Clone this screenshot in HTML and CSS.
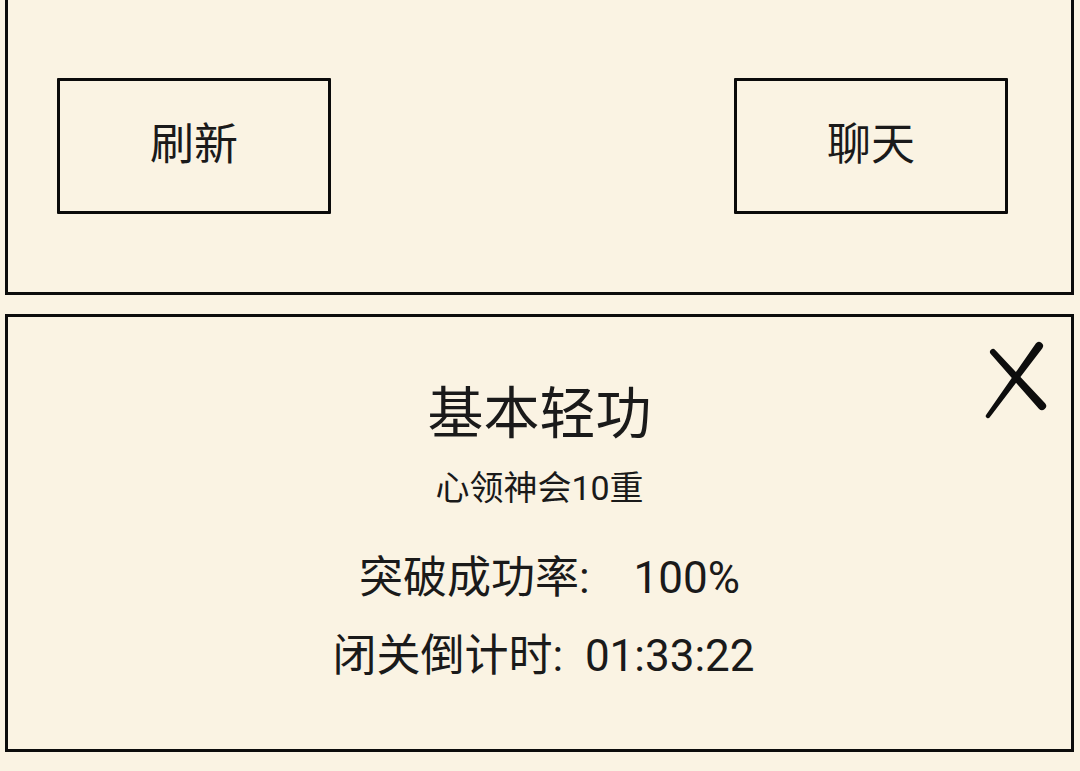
FILE: index.html
```html
<!DOCTYPE html>
<html lang="zh-CN">
<head>
<meta charset="utf-8">
<title>闭关</title>
<link rel="stylesheet" href="styles.css">
</head>
<body>
<div class="page">
  <section class="panel panel-top">
    <div class="btn-row">
      <div class="btn">刷新</div>
      <div class="btn">聊天</div>
    </div>
  </section>
  <section class="panel panel-main">
    <svg class="close" viewBox="0 0 66 82" width="66" height="82" aria-label="关闭">
      <path d="M13.22 9.98 L63.11 63.18 A4.2 4.2 0 0 1 56.89 68.82 L8.78 14.02 A3 3 0 0 1 13.22 9.98 Z" fill="#0d0d0d"/>
      <path d="M53.8 3.6 A4 4 0 0 1 60.2 8.4 L7.8 77.3 A2.2 2.2 0 0 1 4.2 74.7 Z" fill="#0d0d0d"/>
    </svg>
    <div class="info">
      <div class="title">基本轻功</div>
      <div class="sub">心领神会10重</div>
      <div class="line line-rate">突破成功率:　100%</div>
      <div class="line line-time">闭关倒计时:&nbsp; 01:33:22</div>
    </div>
  </section>
</div>
</body>
</html>
```
FILE: styles.css
```css
html, body {
  margin: 0;
  padding: 0;
  background: #faf3e3;
}
body {
  width: 1080px;
  height: 771px;
  overflow: hidden;
  font-family: Roboto, "Noto Sans CJK SC", sans-serif;
  color: #1a1a1a;
}
.page {
  display: flex;
  flex-direction: column;
  padding-left: 5px;
}
.panel {
  box-sizing: border-box;
  width: 1069px;
  border: 3px solid #0c0c0c;
}
.panel-top {
  border-top: none;
  height: 295px;
  padding: 78px 63px 0 49px;
}
.btn-row {
  display: flex;
  justify-content: space-between;
}
.btn {
  box-sizing: border-box;
  width: 274px;
  height: 136px;
  border: 3px solid #0a0a0a;
  border-radius: 1px;
  display: flex;
  align-items: center;
  justify-content: center;
  font-size: 44px;
  line-height: 1;
  padding-bottom: 2px;
}
.panel-main {
  position: relative;
  margin-top: 19px;
  height: 438px;
  padding-top: 69px;
}
.close {
  position: absolute;
  top: 23px;
  right: 23px;
}
.info {
  display: flex;
  flex-direction: column;
  align-items: center;
  white-space: nowrap;
}
.title {
  font-size: 56px;
  line-height: 56px;
}
.sub {
  font-size: 34px;
  line-height: 34px;
  margin-top: 29px;
}
.line {
  font-size: 44px;
  line-height: 44px;
}
.line-rate {
  margin-top: 51px;
  padding-left: 20px;
}
.line-time {
  margin-top: 34px;
  padding-left: 8px;
}
```
